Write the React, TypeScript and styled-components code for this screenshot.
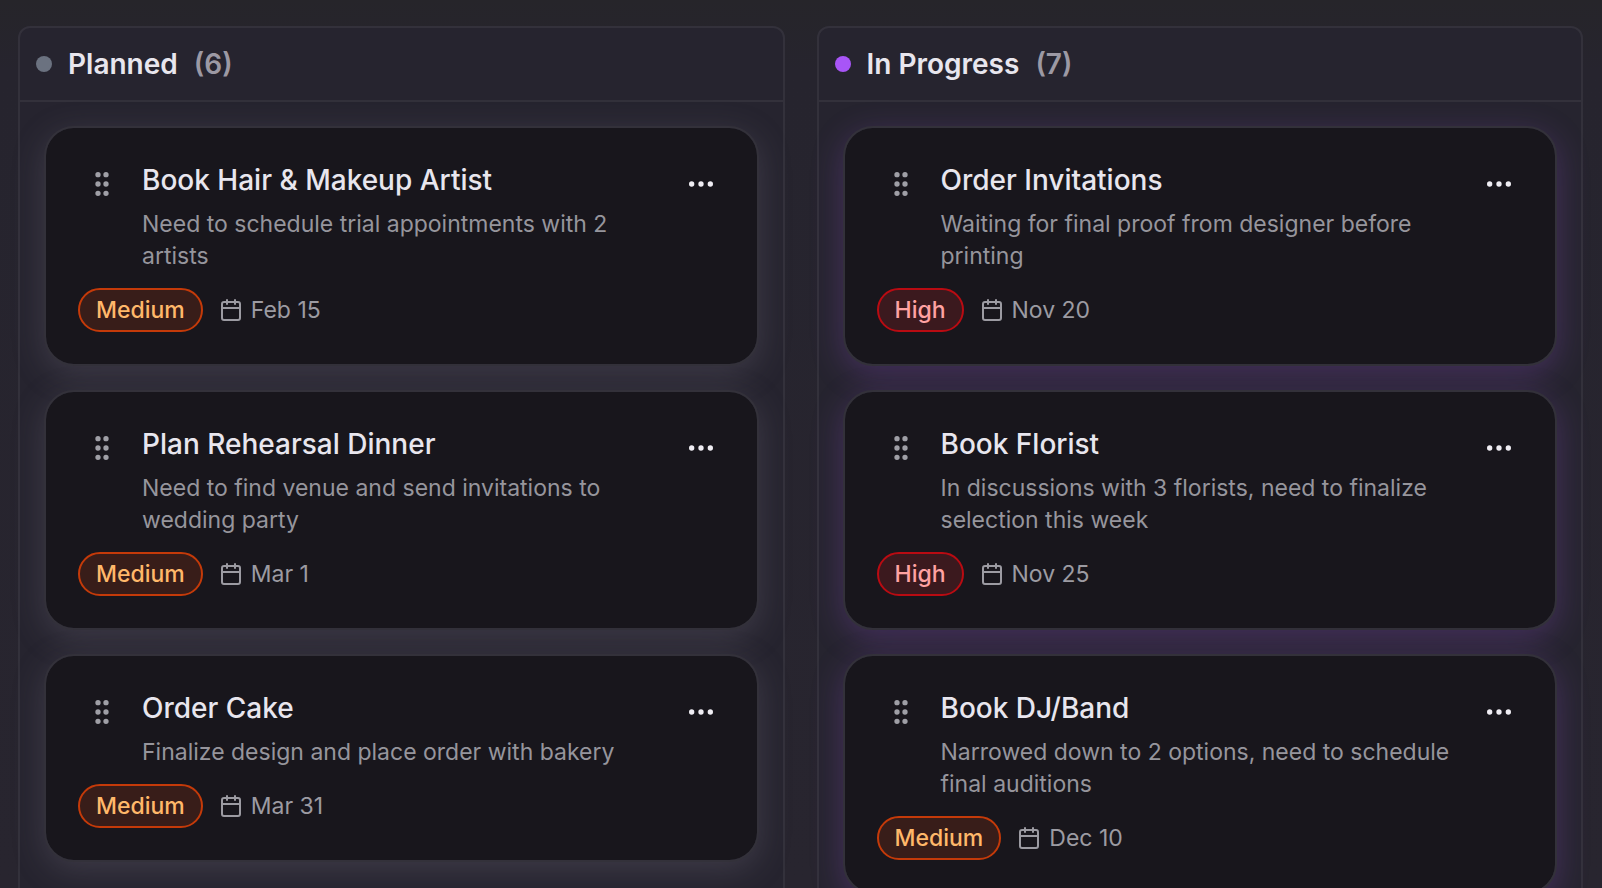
import React from "react";
import styled, { createGlobalStyle } from "styled-components";
import { Calendar, Ellipsis, GripVertical } from "lucide-react";

type Priority = "High" | "Medium";

interface Task {
  title: string;
  note: string;
  priority: Priority;
  due: string;
}

interface Lane {
  name: string;
  count: number;
  dot: string;
  glow: string;
  tasks: Task[];
}

const lanes: Lane[] = [
  {
    name: "Planned",
    count: 6,
    dot: "#6b7280",
    glow: "rgba(124, 120, 136, 0.28)",
    tasks: [
      {
        title: "Book Hair & Makeup Artist",
        note: "Need to schedule trial appointments with 2 artists",
        priority: "Medium",
        due: "Feb 15",
      },
      {
        title: "Plan Rehearsal Dinner",
        note: "Need to find venue and send invitations to wedding party",
        priority: "Medium",
        due: "Mar 1",
      },
      {
        title: "Order Cake",
        note: "Finalize design and place order with bakery",
        priority: "Medium",
        due: "Mar 31",
      },
    ],
  },
  {
    name: "In Progress",
    count: 7,
    dot: "#a855f7",
    glow: "rgba(160, 85, 225, 0.26)",
    tasks: [
      {
        title: "Order Invitations",
        note: "Waiting for final proof from designer before printing",
        priority: "High",
        due: "Nov 20",
      },
      {
        title: "Book Florist",
        note: "In discussions with 3 florists, need to finalize selection this week",
        priority: "High",
        due: "Nov 25",
      },
      {
        title: "Book DJ/Band",
        note: "Narrowed down to 2 options, need to schedule final auditions",
        priority: "Medium",
        due: "Dec 10",
      },
    ],
  },
];

const tones: Record<Priority, { text: string; edge: string; fill: string }> = {
  High: { text: "#ffa2a2", edge: "#b90b12", fill: "#3b191e" },
  Medium: { text: "#ffb86a", edge: "#c43a09", fill: "#381d19" },
};

const GlobalStyle = createGlobalStyle`
  * { box-sizing: border-box; }
  body {
    margin: 0;
    overflow: hidden;
    background: #26242c;
    color: #e8e6ee;
    font-family: Inter, "Liberation Sans", sans-serif;
  }
`;

const Board = styled.main`
  display: grid;
  grid-template-columns: repeat(2, minmax(0, 1fr));
  gap: 32px;
  height: 100vh;
  padding: 26px 19px 0 18px;
  overflow: hidden;
  background: linear-gradient(#26252a, #26242e 72px, #28252f);
`;

const Column = styled.section`
  border: 2px solid #33313b;
  border-radius: 12px;
  background: #26242f;
`;

const ColumnHeader = styled.header`
  display: flex;
  align-items: center;
  gap: 16px;
  height: 74px;
  padding: 0 16px;
  border-bottom: 2px solid #33313b;
`;

const Dot = styled.span<{ $color: string }>`
  width: 16px;
  height: 16px;
  border-radius: 50%;
  background: ${(p) => p.$color};
`;

const ColumnName = styled.h2`
  margin: 0;
  font-size: 28px;
  font-weight: 600;
  line-height: 40px;
`;

const Count = styled.span`
  color: #9c99a4;
  font-size: 28px;
  font-weight: 600;
  line-height: 40px;
`;

const Cards = styled.ul`
  display: flex;
  flex-direction: column;
  gap: 24px;
  margin: 0;
  padding: 24px;
  list-style: none;
`;

const Card = styled.li<{ $glow: string }>`
  display: flex;
  flex-direction: column;
  gap: 16px;
  padding: 32px;
  border: 2px solid #33313a;
  border-radius: 30px;
  background: #18161c;
  background-clip: padding-box;
  box-shadow: 0 8px 32px ${(p) => p.$glow};
`;

const CardTop = styled.div`
  display: flex;
  align-items: flex-start;
  gap: 16px;
`;

const IconButton = styled.button<{ $muted?: boolean }>`
  display: flex;
  flex: none;
  padding: 8px;
  border: 0;
  background: none;
  color: ${(p) => (p.$muted ? "#9f9fa6" : "#efedf3")};
  cursor: ${(p) => (p.$muted ? "grab" : "pointer")};
`;

const Copy = styled.div`
  flex: 1;
  min-width: 0;
`;

const Title = styled.h3`
  margin: 0 0 8px;
  font-size: 28px;
  font-weight: 500;
  line-height: 40px;
`;

const Note = styled.p`
  margin: 0;
  color: #96959c;
  font-size: 23px;
  line-height: 32px;
`;

const Meta = styled.div`
  display: flex;
  align-items: center;
  gap: 16px;
`;

const Badge = styled.span<{ $priority: Priority }>`
  padding: 4px 16px;
  border: 2px solid ${(p) => tones[p.$priority].edge};
  border-radius: 22px;
  background: ${(p) => tones[p.$priority].fill};
  color: ${(p) => tones[p.$priority].text};
  font-size: 23px;
  font-weight: 500;
  line-height: 32px;
  height: 44px;
`;

const Due = styled.span`
  display: flex;
  align-items: center;
  gap: 8px;
  color: #9c9ba2;
  font-size: 23px;
  line-height: 32px;
`;

function TaskCard({ task, glow }: { task: Task; glow: string }) {
  return (
    <Card $glow={glow}>
      <CardTop>
        <IconButton type="button" $muted aria-label={`Move ${task.title}`}>
          <GripVertical size={32} />
        </IconButton>
        <Copy>
          <Title>{task.title}</Title>
          <Note>{task.note}</Note>
        </Copy>
        <IconButton type="button" aria-label={`Options for ${task.title}`}>
          <Ellipsis size={32} />
        </IconButton>
      </CardTop>
      <Meta>
        <Badge $priority={task.priority}>{task.priority}</Badge>
        <Due>
          <Calendar size={24} />
          <time>{task.due}</time>
        </Due>
      </Meta>
    </Card>
  );
}

export default function App() {
  return (
    <>
      <GlobalStyle />
      <Board>
        {lanes.map((lane) => (
          <Column key={lane.name}>
            <ColumnHeader>
              <Dot $color={lane.dot} />
              <ColumnName>{lane.name}</ColumnName>
              <Count>({lane.count})</Count>
            </ColumnHeader>
            <Cards>
              {lane.tasks.map((task) => (
                <TaskCard key={task.title} task={task} glow={lane.glow} />
              ))}
            </Cards>
          </Column>
        ))}
      </Board>
    </>
  );
}
